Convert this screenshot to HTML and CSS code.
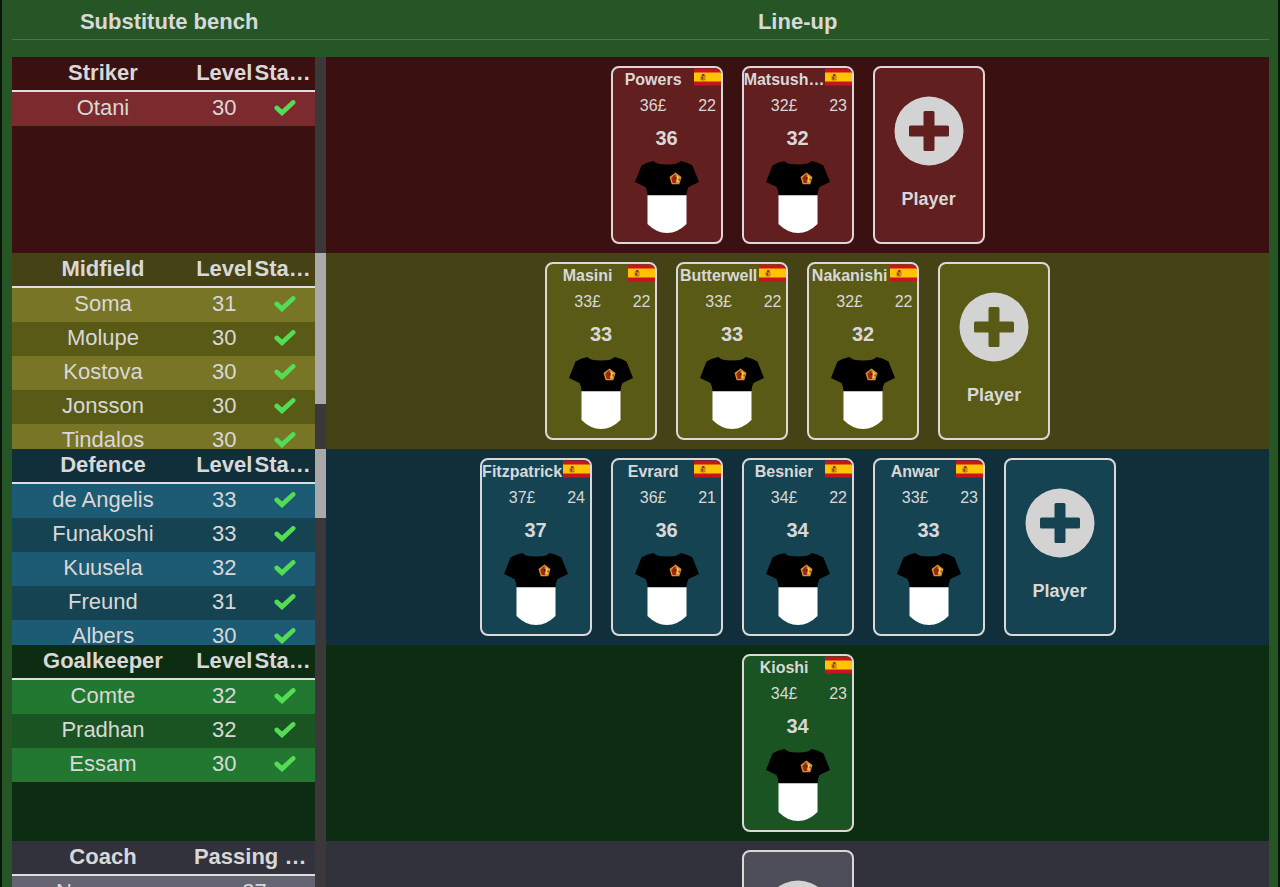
FILE: index.html
```html
<!DOCTYPE html>
<html lang="en">
<head>
<meta charset="utf-8">
<meta name="viewport" content="width=device-width, initial-scale=1">
<title>Line-up</title>
<link rel="stylesheet" href="styles.css">
</head>
<body>
<svg class="sprite" aria-hidden="true">
  <symbol id="check" viewBox="0 0 22 17"><path d="M2 8.200 8 13.800 20 2.600" fill="none" stroke="#54dc54" stroke-width="4.600" stroke-linejoin="miter" stroke-linecap="butt"/><path d="M2.500 8.700 8 13.800 19.500 3" fill="none" stroke="#54dc54" stroke-width="4" stroke-linecap="round"/></symbol>
  <symbol id="plus" viewBox="0 0 70 70"><path fill="#d3d3d3" fill-rule="evenodd" d="M35 .5a34.5 34.5 0 1 1 0 69a34.5 34.5 0 1 1 0-69zM31 15q-1.500 0-1.500 1.500V29.500H16.500q-1.500 0-1.500 1.500v8q0 1.500 1.500 1.500H29.500V53.500q0 1.500 1.500 1.500h8q1.500 0 1.500-1.500V40.500H53.500q1.500 0 1.500-1.500v-8q0-1.500-1.500-1.500H40.500V16.500q0-1.500-1.500-1.500z"/></symbol>
  <symbol id="flag" viewBox="0 0 27 17"><path fill="#c8141c" d="M0 0h27v17H0z"/><path fill="#ffc400" d="M0 4h27v9H0z"/><path fill="#c07a1e" d="M6.500 7h5v4l-1 1h-3l-1-1z"/><path fill="#8f3a1b" d="M8 5.500h2.500v2H8zM7.500 8.500H9V11H7.500z"/><path fill="#e8a02c" d="M9.500 8.500h1.200v1.500H9.500z"/></symbol>
  <symbol id="shirt" viewBox="0 0 64 72"><path fill="#fff" d="M12.500 34h39v29q-9 9-19.500 9t-19.500-9z"/><path fill="#000" d="M18.500 0q2.500 3.500 13.500 3.500T45.500 0q7 1 12 4.500L64 21l-10.500 5q-2 4-2 8.300h-39q0-4.300-2-8.300L0 21 6.500 4.500Q11.500 1 18.500 0z"/><path fill="#d9902a" d="m40.500 11.500 6 4.500-2.200 7.200h-7.600L34.500 16z"/><path fill="#9c2418" d="m39 14 1.500-1 .500 9h-3.200L36.300 17z"/><path fill="#f2cf4a" d="m42 14.500 2.500 2.200-1 4.300H42z"/><path fill="#5a1c10" d="M40 16h1.500v2.500H40zM43.500 17.500h1v2h-1z"/></symbol>
</svg>
<main class="squad">
  <header class="heads">
    <h2>Substitute bench</h2>
    <h2>Line-up</h2>
  </header>

  <section class="line striker">
    <div class="bench">
      <div class="list">
        <table>
          <thead><tr><th class="name">Striker</th><th>Level</th><th>Status</th></tr></thead>
          <tbody>
            <tr><td>Otani</td><td>30</td><td><svg class="check" role="img" aria-label="Fit"><use href="#check"/></svg></td></tr>
          </tbody>
        </table>
      </div>
      <div class="rail"></div>
    </div>
    <div class="field">
      <article class="card"><h3>Powers</h3><svg class="flag"><use href="#flag"/></svg><span>36£</span><span>22</span><strong>36</strong><svg class="shirt"><use href="#shirt"/></svg></article>
      <article class="card"><h3>Matsushita</h3><svg class="flag"><use href="#flag"/></svg><span>32£</span><span>23</span><strong>32</strong><svg class="shirt"><use href="#shirt"/></svg></article>
      <button class="add" type="button"><svg class="plus" aria-hidden="true"><use href="#plus"/></svg>Player</button>
    </div>
  </section>

  <section class="line midfield">
    <div class="bench">
      <div class="list">
        <table>
          <thead><tr><th class="name">Midfield</th><th>Level</th><th>Status</th></tr></thead>
          <tbody>
            <tr><td>Soma</td><td>31</td><td><svg class="check" role="img" aria-label="Fit"><use href="#check"/></svg></td></tr>
            <tr><td>Molupe</td><td>30</td><td><svg class="check" role="img" aria-label="Fit"><use href="#check"/></svg></td></tr>
            <tr><td>Kostova</td><td>30</td><td><svg class="check" role="img" aria-label="Fit"><use href="#check"/></svg></td></tr>
            <tr><td>Jonsson</td><td>30</td><td><svg class="check" role="img" aria-label="Fit"><use href="#check"/></svg></td></tr>
            <tr><td>Tindalos</td><td>30</td><td><svg class="check" role="img" aria-label="Fit"><use href="#check"/></svg></td></tr>
          </tbody>
        </table>
      </div>
      <div class="rail"><div class="thumb" style="height: 77%"></div></div>
    </div>
    <div class="field">
      <article class="card"><h3>Masini</h3><svg class="flag"><use href="#flag"/></svg><span>33£</span><span>22</span><strong>33</strong><svg class="shirt"><use href="#shirt"/></svg></article>
      <article class="card"><h3>Butterwell</h3><svg class="flag"><use href="#flag"/></svg><span>33£</span><span>22</span><strong>33</strong><svg class="shirt"><use href="#shirt"/></svg></article>
      <article class="card"><h3>Nakanishi</h3><svg class="flag"><use href="#flag"/></svg><span>32£</span><span>22</span><strong>32</strong><svg class="shirt"><use href="#shirt"/></svg></article>
      <button class="add" type="button"><svg class="plus" aria-hidden="true"><use href="#plus"/></svg>Player</button>
    </div>
  </section>

  <section class="line defence">
    <div class="bench">
      <div class="list">
        <table>
          <thead><tr><th class="name">Defence</th><th>Level</th><th>Status</th></tr></thead>
          <tbody>
            <tr><td>de Angelis</td><td>33</td><td><svg class="check" role="img" aria-label="Fit"><use href="#check"/></svg></td></tr>
            <tr><td>Funakoshi</td><td>33</td><td><svg class="check" role="img" aria-label="Fit"><use href="#check"/></svg></td></tr>
            <tr><td>Kuusela</td><td>32</td><td><svg class="check" role="img" aria-label="Fit"><use href="#check"/></svg></td></tr>
            <tr><td>Freund</td><td>31</td><td><svg class="check" role="img" aria-label="Fit"><use href="#check"/></svg></td></tr>
            <tr><td>Albers</td><td>30</td><td><svg class="check" role="img" aria-label="Fit"><use href="#check"/></svg></td></tr>
          </tbody>
        </table>
      </div>
      <div class="rail"><div class="thumb" style="height: 35%"></div></div>
    </div>
    <div class="field">
      <article class="card"><h3>Fitzpatrick</h3><svg class="flag"><use href="#flag"/></svg><span>37£</span><span>24</span><strong>37</strong><svg class="shirt"><use href="#shirt"/></svg></article>
      <article class="card"><h3>Evrard</h3><svg class="flag"><use href="#flag"/></svg><span>36£</span><span>21</span><strong>36</strong><svg class="shirt"><use href="#shirt"/></svg></article>
      <article class="card"><h3>Besnier</h3><svg class="flag"><use href="#flag"/></svg><span>34£</span><span>22</span><strong>34</strong><svg class="shirt"><use href="#shirt"/></svg></article>
      <article class="card"><h3>Anwar</h3><svg class="flag"><use href="#flag"/></svg><span>33£</span><span>23</span><strong>33</strong><svg class="shirt"><use href="#shirt"/></svg></article>
      <button class="add" type="button"><svg class="plus" aria-hidden="true"><use href="#plus"/></svg>Player</button>
    </div>
  </section>

  <section class="line keeper">
    <div class="bench">
      <div class="list">
        <table>
          <thead><tr><th class="name">Goalkeeper</th><th>Level</th><th>Status</th></tr></thead>
          <tbody>
            <tr><td>Comte</td><td>32</td><td><svg class="check" role="img" aria-label="Fit"><use href="#check"/></svg></td></tr>
            <tr><td>Pradhan</td><td>32</td><td><svg class="check" role="img" aria-label="Fit"><use href="#check"/></svg></td></tr>
            <tr><td>Essam</td><td>30</td><td><svg class="check" role="img" aria-label="Fit"><use href="#check"/></svg></td></tr>
          </tbody>
        </table>
      </div>
      <div class="rail"></div>
    </div>
    <div class="field">
      <article class="card"><h3>Kioshi</h3><svg class="flag"><use href="#flag"/></svg><span>34£</span><span>23</span><strong>34</strong><svg class="shirt"><use href="#shirt"/></svg></article>
    </div>
  </section>

  <section class="line coach">
    <div class="bench">
      <div class="list">
        <table>
          <thead><tr><th class="name">Coach</th><th class="skill">Passing skill</th></tr></thead>
          <tbody>
            <tr><td>Nazarova</td><td>27</td></tr>
          </tbody>
        </table>
      </div>
      <div class="rail"></div>
    </div>
    <div class="field">
      <button class="add" type="button"><svg class="plus" aria-hidden="true"><use href="#plus"/></svg>Coach</button>
    </div>
  </section>
</main>
</body>
</html>
```
FILE: styles.css
```css
* {
  box-sizing: border-box;
}

body {
  margin: 0;
  padding: 0 2px;
  background: #0a160a;
  color: #d8d8d8;
  font-family: "Liberation Sans", Arial, sans-serif;
}

.sprite {
  display: none;
}

.squad {
  height: 100vh;
  overflow: hidden;
  padding: 0 9px 0 10px;
  background: #275626;
}

.heads,
.line {
  display: grid;
  grid-template-columns: 1fr 3fr;
}

.heads {
  margin-bottom: 17px;
  border-bottom: 1px solid #45764a;
}

.heads h2 {
  margin: 0;
  padding: 8px 0 3px;
  font-size: 22px;
  line-height: 28px;
  text-align: center;
}

.line {
  height: 196px;
  background: var(--dark);
}

.striker {
  --dark: #3a1011;
  --mid: #621f20;
  --light: #7b2b2d;
}

.midfield {
  --dark: #454315;
  --mid: #5a5a17;
  --light: #787526;
}

.defence {
  --dark: #102f3b;
  --mid: #164352;
  --light: #1d5a73;
}

.keeper {
  --dark: #0d2d13;
  --mid: #195422;
  --light: #227830;
}

.coach {
  --dark: #32323c;
  --mid: #4e4e5a;
  --light: #656473;
}

.bench {
  display: flex;
  min-width: 0;
  height: 196px;
}

.list {
  flex: 1;
  min-width: 0;
  overflow: hidden;
}

.rail {
  width: 11px;
  background: #3a3838;
}

.thumb {
  background: #a9a9a9;
}

table {
  width: 100%;
  table-layout: fixed;
  border-collapse: separate;
  border-spacing: 0;
  font-size: 22px;
  line-height: 32px;
  text-align: center;
}

th,
td {
  padding: 0;
  vertical-align: top;
}

th {
  height: 35px;
  overflow: hidden;
  border-bottom: 2px solid #dedede;
  text-overflow: ellipsis;
  white-space: nowrap;
}

.name {
  width: 60%;
}

.skill {
  width: 40%;
}

td {
  height: 34px;
  background: var(--light);
}

tr:nth-child(even) td {
  background: var(--mid);
}

.check {
  display: block;
  width: 22px;
  height: 17px;
  margin: 7px auto 0;
}

.field {
  display: flex;
  justify-content: center;
  gap: 19px;
  padding: 9px 0;
}

.card,
.add {
  width: 112px;
  height: 178px;
  border: 2px solid #dcd8d8;
  border-radius: 8px;
  background: var(--mid);
}

.card {
  display: grid;
  grid-template-columns: 1fr 27px;
  grid-template-rows: 24px 28px 36px 1fr;
  align-items: center;
  justify-items: center;
  overflow: hidden;
}

.card h3 {
  max-width: 100%;
  margin: 0;
  overflow: hidden;
  font-size: 16px;
  line-height: 22px;
  text-overflow: ellipsis;
  white-space: nowrap;
}

.card span {
  font-size: 16px;
}

.card strong {
  grid-column: 1 / 3;
  font-size: 20px;
}

.flag {
  align-self: start;
  width: 27px;
  height: 18px;
}

.shirt {
  grid-column: 1 / 3;
  align-self: end;
  width: 64px;
  height: 72px;
  margin-bottom: 9px;
}

.add {
  display: flex;
  flex-direction: column;
  align-items: center;
  gap: 22px;
  padding: 28px 0 0;
  color: inherit;
  font: bold 18px/22px "Liberation Sans", Arial, sans-serif;
  cursor: pointer;
}

.plus {
  width: 70px;
  height: 70px;
}
```
